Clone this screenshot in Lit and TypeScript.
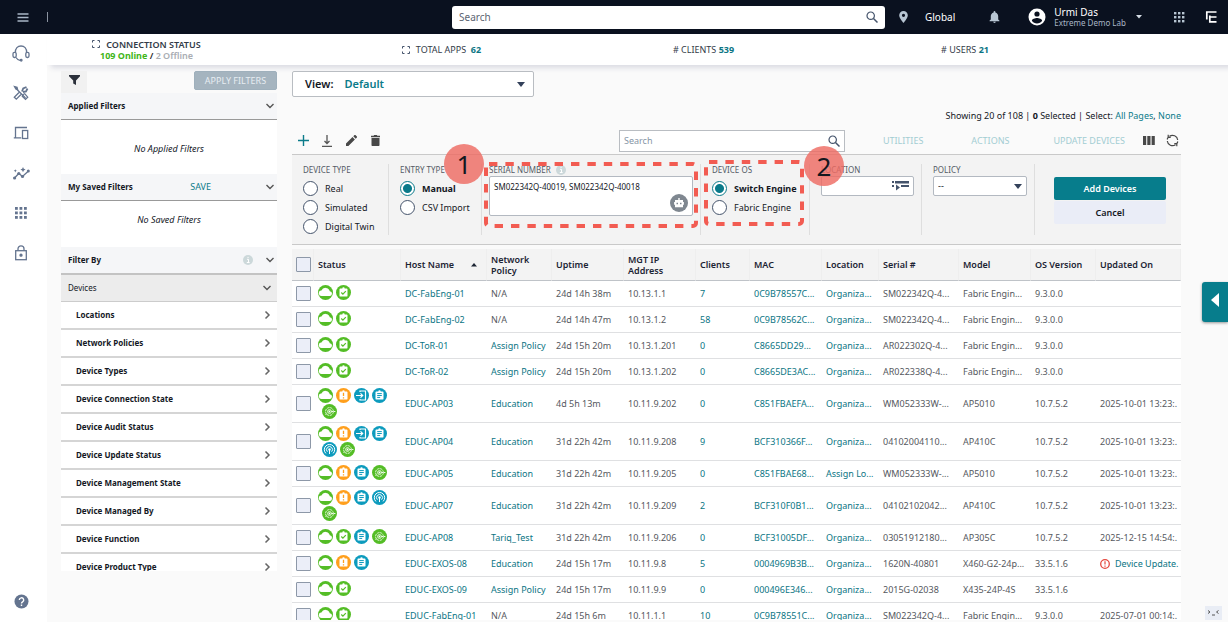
import { LitElement, html, css, svg, nothing } from "lit";
import { customElement, property } from "lit/decorators.js";

type IconName = "cloud" | "check" | "alert" | "login" | "list" | "radar" | "ai";

interface Row {
  icons: IconName[];
  host: string;
  policy: string;
  uptime: string;
  ip: string;
  clients: string;
  mac: string;
  location: string;
  serial: string;
  model: string;
  os: string;
  updated: string;
}

const row = (icons: string, ...t: string[]): Row => ({
  icons: icons.split(" ") as IconName[],
  host: t[0], policy: t[1], uptime: t[2], ip: t[3], clients: t[4], mac: t[5],
  location: t[6], serial: t[7], model: t[8], os: t[9], updated: t[10],
});

const ROWS: Row[] = [
  row("cloud check", "DC-FabEng-01", "N/A", "24d 14h 38m", "10.13.1.1", "7", "0C9B78557C...", "Organiza...", "SM022342Q-4...", "Fabric Engin...", "9.3.0.0", ""),
  row("cloud check", "DC-FabEng-02", "N/A", "24d 14h 47m", "10.13.1.2", "58", "0C9B78562C...", "Organiza...", "SM022342Q-4...", "Fabric Engin...", "9.3.0.0", ""),
  row("cloud check", "DC-ToR-01", "Assign Policy", "24d 15h 20m", "10.13.1.201", "0", "C8665DD29...", "Organiza...", "AR022302Q-4...", "Fabric Engin...", "9.3.0.0", ""),
  row("cloud check", "DC-ToR-02", "Assign Policy", "24d 15h 20m", "10.13.1.202", "0", "C8665DE3AC...", "Organiza...", "AR022338Q-4...", "Fabric Engin...", "9.3.0.0", ""),
  row("cloud alert login list ai", "EDUC-AP03", "Education", "4d 5h 13m", "10.11.9.202", "0", "C851FBAEFA...", "Organiza...", "WM052333W-...", "AP5010", "10.7.5.2", "2025-10-01 13:23:."),
  row("cloud alert login list radar ai", "EDUC-AP04", "Education", "31d 22h 42m", "10.11.9.208", "9", "BCF310366F...", "Organiza...", "04102004110...", "AP410C", "10.7.5.2", "2025-10-01 13:23:."),
  row("cloud alert list ai", "EDUC-AP05", "Education", "31d 22h 42m", "10.11.9.205", "0", "C851FBAE68...", "Assign Lo...", "WM052333W-...", "AP5010", "10.7.5.2", "2025-10-01 13:23:."),
  row("cloud alert list radar ai", "EDUC-AP07", "Education", "31d 22h 42m", "10.11.9.209", "2", "BCF310F0B1...", "Organiza...", "04102102042...", "AP410C", "10.7.5.2", "2025-10-01 13:23:."),
  row("cloud check list ai", "EDUC-AP08", "Tariq_Test", "31d 22h 42m", "10.11.9.206", "0", "BCF31005DF...", "Organiza...", "03051912180...", "AP305C", "10.7.5.2", "2025-12-15 14:54:."),
  row("cloud alert list", "EDUC-EXOS-08", "Education", "24d 15h 17m", "10.11.9.8", "5", "0004969B3B...", "Organiza...", "1620N-40801", "X460-G2-24p...", "33.5.1.6", "!Device Update."),
  row("cloud check", "EDUC-EXOS-09", "Assign Policy", "24d 15h 17m", "10.11.9.9", "0", "000496E346...", "Organiza...", "2015G-02038", "X435-24P-4S", "33.5.1.6", ""),
  row("cloud check", "EDUC-FabEng-01", "N/A", "24d 15h 6m", "10.11.1.1", "10", "0C9B78551C...", "Organiza...", "SM022342Q-4...", "Fabric Engin...", "9.3.0.0", "2025-07-01 00:14:."),
];

const COLUMNS: [string, number][] = [
  ["Status", 87], ["Host Name", 86], ["Network Policy", 65], ["Uptime", 72],
  ["MGT IP Address", 72], ["Clients", 54], ["MAC", 72], ["Location", 57],
  ["Serial #", 80], ["Model", 72], ["OS Version", 65], ["Updated On", 85],
];

const FILTERS = [
  "Locations", "Network Policies", "Device Types", "Device Connection State",
  "Device Audit Status", "Device Update Status", "Device Management State",
  "Device Managed By", "Device Function", "Device Product Type",
];

const GLYPHS: Record<IconName, unknown> = {
  cloud: svg`<circle cx="7.5" cy="7.5" r="7.5" fill="#54bd26"/><path fill="#fff" d="M3.800 11h7.600a2.400 2.400 0 0 0 .4-4.800A4.500 4.500 0 0 0 3.400 5.400 2.800 2.800 0 0 0 3.800 11z"/>`,
  check: svg`<circle cx="7.5" cy="7.5" r="7.5" fill="#54bd26"/><path fill="#fff" d="M4.400 3.400h1.900a1.200 1.200 0 0 1 2.400 0h1.900c.5 0 .9.4.9.9v6.400c0 .5-.4.9-.9.9H4.400a.9.9 0 0 1-.9-.9V4.300c0-.5.4-.9.9-.9z"/><path d="m5.300 7.500 1.600 1.600 2.900-3" fill="none" stroke="#54bd26" stroke-width="1.200"/>`,
  alert: svg`<circle cx="7.5" cy="7.5" r="7.5" fill="#ff9f1c"/><path fill="#fff" d="M4.400 3.400h1.900a1.200 1.200 0 0 1 2.400 0h1.900c.5 0 .9.4.9.9v6.400c0 .5-.4.9-.9.9H4.400a.9.9 0 0 1-.9-.9V4.300c0-.5.4-.9.9-.9z"/><path d="M7.500 4.800v3.200M7.500 9.200v1.300" stroke="#ff9f1c" stroke-width="1.300"/>`,
  login: svg`<circle cx="7.5" cy="7.5" r="7.5" fill="#0d9bbd"/><path d="M6 4V3h5.500v9H6v-1M2 7.500h6.500M6.500 5.300l2.200 2.200-2.200 2.200" fill="none" stroke="#fff" stroke-width="1.200"/>`,
  list: svg`<circle cx="7.5" cy="7.5" r="7.5" fill="#0d9bbd"/><path fill="#fff" d="M4.400 3.400h1.900a1.200 1.200 0 0 1 2.400 0h1.900c.5 0 .9.4.9.9v6.400c0 .5-.4.9-.9.9H4.400a.9.9 0 0 1-.9-.9V4.300c0-.5.4-.9.9-.9z"/><path d="M5.200 5.600h4.600M5.200 7.500h4.600M5.200 9.400h3" stroke="#0d9bbd"/>`,
  radar: svg`<circle cx="7.5" cy="7.5" r="7.5" fill="#0d9bbd"/><g fill="none" stroke="#fff"><path d="M3.900 11.400a5.200 5.200 0 1 1 7.200 0"/><path d="M5.400 9.700a3 3 0 1 1 4.200 0"/></g><circle cx="7.500" cy="7.500" r="1.200" fill="#fff"/><path d="M7.500 8v4" stroke="#fff"/>`,
  ai: svg`<circle cx="7.5" cy="7.5" r="7.5" fill="#54bd26"/><g fill="none" stroke="#fff"><circle cx="7.500" cy="7.500" r="3.900" stroke-width=".8" stroke-dasharray="2.400 .7"/><circle cx="7.500" cy="7.500" r="1.900" stroke-width=".8"/><path d="M9.400 7.500h1.800M12 7.500h1.400M3.500 11l1.200-1.200" stroke-width=".9"/></g><circle cx="7.500" cy="7.500" r=".9" fill="#fff"/>`,
};

const searchIcon = html`<svg width="12" height="12" viewBox="0 0 12 12" fill="none" stroke="#44536b"><circle cx="4.700" cy="4.700" r="3.700" stroke-width="1.200"/><path d="m7.500 7.500 4 4" stroke-width="1.500"/></svg>`;
const chevronDown = html`<svg width="10" height="10" viewBox="0 0 10 10" fill="none" stroke="#555" stroke-width="1.400"><path d="m1.500 3 3.500 3.500L8.500 3"/></svg>`;
const chevronRight = html`<svg width="10" height="10" viewBox="0 0 10 10" fill="none" stroke="#666" stroke-width="1.500"><path d="m3.500 1.500 3.500 3.500-3.500 3.500"/></svg>`;
const infoIcon = html`<svg width="10" height="10" viewBox="0 0 10 10"><circle cx="5" cy="5" r="5" fill="#ccd8da"/><path d="M4 4.300h1.500v3.200M3.800 7.500h2.800M4.500 2.400h1.100" stroke="#fff" fill="none"/></svg>`;
const expandIcon = html`<svg width="8" height="8" viewBox="0 0 8 8" fill="none" stroke="#44536b"><path d="M.5 2.500v-2h2M5.500.5h2v2M7.500 5.500v2h-2M2.500 7.500h-2v-2"/></svg>`;

@customElement("status-icon")
export class StatusIcon extends LitElement {
  @property() name: IconName = "cloud";
  static styles = css`
    :host { display: block; width: 15px; height: 15px; }
    svg { display: block; }
  `;
  render() {
    return html`<svg width="15" height="15" viewBox="0 0 15 15">${GLYPHS[this.name]}</svg>`;
  }
}

@customElement("top-bar")
export class TopBar extends LitElement {
  static styles = css`
    :host { display: grid; grid-template-columns: minmax(0, 452fr) minmax(0, 433fr) minmax(0, 343fr); align-items: center; height: 34px; background: #0a111f; color: #fff; font-size: 10px; }
    button { background: none; border: 0; padding: 0; color: inherit; font: inherit; display: flex; align-items: center; }
    .left { display: flex; align-items: center; padding-left: 17px; gap: 18px; }
    .divider { width: 1px; height: 10px; background: #8b93a0; }
    .search { height: 23px; background: #fff; border-radius: 3px; display: flex; align-items: center; padding: 0 7px; }
    .search input { flex: 1; min-width: 0; border: 0; outline: 0; padding: 0; font: inherit; background: none; color: #222; }
    .search input::placeholder { color: #5b6472; opacity: 1; }
    .right { display: flex; align-items: center; padding: 0 11px 0 14px; }
    .place { gap: 17px; }
    .bell { margin-left: 34px; }
    .user { margin-left: 28px; gap: 8px; text-align: left; line-height: 11px; }
    .org { display: block; font-size: 8px; line-height: 10px; color: #a9b6c6; }
    .name { display: block; font-size: 10px; }
    .caret { margin-left: 2px; }
    .end { margin-left: auto; display: flex; gap: 20px; align-items: center; }
  `;
  render() {
    return html`
      <div class="left">
        <button aria-label="Menu"><svg width="12" height="9" viewBox="0 0 12 9" stroke="#a9b6c6" stroke-width="1.300"><path d="M.5 1h11M.5 4.500h11M.5 8h11"/></svg></button>
        <span class="divider"></span>
      </div>
      <div class="search"><input type="text" placeholder="Search" aria-label="Search everything" />${searchIcon}</div>
      <div class="right">
        <button class="place"><svg width="9" height="12" viewBox="0 0 9 12"><path fill="#b7c5d2" d="M4.500 0A4.300 4.300 0 0 0 .2 4.300C.2 7.500 4.500 12 4.500 12s4.300-4.500 4.300-7.700A4.300 4.300 0 0 0 4.500 0zm0 5.900a1.600 1.600 0 1 1 0-3.200 1.600 1.600 0 0 1 0 3.200z"/></svg>Global</button>
        <button class="bell" aria-label="Notifications"><svg width="11" height="12" viewBox="0 0 11 12"><path fill="#b7c5d2" d="M5.500 12c.7 0 1.300-.5 1.300-1.200H4.200c0 .7.600 1.200 1.300 1.200zm3.700-3.600V5.300c0-1.900-1-3.400-2.800-3.900V1a.9.900 0 0 0-1.800 0v.4C2.800 1.900 1.800 3.400 1.800 5.300v3.100L.6 9.600v.6h9.800v-.6z"/></svg></button>
        <button class="user"><svg width="18" height="18" viewBox="0 0 18 18"><circle cx="9" cy="9" r="8.500" fill="#fff"/><circle cx="9" cy="6" r="2.600" fill="#0a111f"/><path d="M3.900 12.700a6.100 6.100 0 0 0 10.200 0c0-1.700-3.400-2.600-5.100-2.600s-5.100.9-5.100 2.600z" fill="#0a111f"/></svg>
          <span><span class="name">Urmi Das</span><span class="org">Extreme Demo Lab</span></span>
          <svg class="caret" width="6" height="4" viewBox="0 0 6 4"><path d="M0 0h6L3 3.500z" fill="#d5dde5"/></svg></button>
        <div class="end">
          <button aria-label="Apps"><svg width="11" height="11" viewBox="0 0 11 11" fill="#b7c5d2">${[0, 4, 8].map((y) => [0, 4, 8].map((x) => svg`<rect x=${x} y=${y} width="2.400" height="2.400"/>`))}</svg></button>
          <svg width="12" height="12" viewBox="0 0 12 12" fill="none" stroke="#fff" stroke-width="1.700"><path d="M11.500 1H1.800v7.500M11.500 10.800H4.800V4.500M4.800 6h6.700"/></svg>
        </div>
      </div>`;
  }
}

@customElement("side-rail")
export class SideRail extends LitElement {
  static styles = css`
    :host { display: flex; flex-direction: column; align-items: center; width: 47px; background: #fff; box-sizing: border-box; padding: 11px 5px 13px 0; gap: 24px; }
    a { display: flex; height: 16px; align-items: center; }
    .help { margin-top: auto; }
  `;
  render() {
    return html`
      <a href="#support" aria-label="Support"><svg width="18" height="17" viewBox="0 0 18 17" fill="none" stroke="#64748f" stroke-width="1.300"><path d="M3.400 7.500C3.200 3.200 5.700 1 9 1s5.800 2.200 5.600 6.500"/><rect x="1" y="7.300" width="3.200" height="5.200" rx="1.400"/><rect x="13.800" y="7.300" width="3.200" height="5.200" rx="1.400"/><path d="M4 12.500c1 1.700 2.300 2.600 4 2.800"/><circle cx="9.200" cy="15.300" r=".8"/></svg></a>
      <a href="#tools" aria-label="Tools"><svg width="16" height="16" viewBox="0 0 16 16" fill="none" stroke="#64748f" stroke-width="1.300"><path d="m6 7.500-4.700 4.700 2 2L8 9.500M3 3.500l9.500 9.500"/><path d="m10 9.500 1.700-.8 3 3.500-2.200 2.200-3.200-3z"/><path d="m9 6.500 1.200-3L13.500 2M14.500 3.500 13 6.500l-3 .5" stroke-width="1.800"/><path d="M1.500 1.500 4 2.300l.5 2L2.800 4z" fill="#64748f"/></svg></a>
      <a href="#devices" aria-label="Devices"><svg width="16" height="14" viewBox="0 0 16 14" fill="none" stroke="#64748f" stroke-width="1.300"><path d="M14 1.500H2.500v9.800M.8 11.800h7.500"/><rect x="9.500" y="4.500" width="5.200" height="8"/></svg></a>
      <a href="#insights" aria-label="Insights"><svg width="17" height="13" viewBox="0 0 17 13" fill="none" stroke="#64748f" stroke-width="1.300"><path d="m1.500 11 4.300-4.500L9.500 9.500 15.500 4"/><g fill="#64748f" stroke="none"><circle cx="1.600" cy="11" r="1.600"/><circle cx="5.800" cy="6.500" r="1.600"/><circle cx="9.500" cy="9.500" r="1.600"/><circle cx="15.300" cy="4" r="1.500"/><path d="m10 0 .8 1.800 1.800.8-1.800.8L10 5.200l-.8-1.800-1.800-.8 1.800-.8zM2.300 2.200l.5 1.100 1.100.5-1.100.5-.5 1.100-.5-1.100-1.100-.5 1.100-.5z"/></g></svg></a>
      <a href="#apps" aria-label="Applications"><svg width="12" height="12" viewBox="0 0 12 12" fill="#64748f">${[0, 4.5, 9].map((y) => [0, 4.5, 9].map((x) => svg`<rect x=${x} y=${y} width="2.800" height="2.800"/>`))}</svg></a>
      <a href="#security" aria-label="Security"><svg width="12" height="16" viewBox="0 0 12 16" fill="none" stroke="#64748f" stroke-width="1.300"><rect x=".7" y="5.700" width="10.600" height="9"/><path d="M3 5.500V3.800a3 3 0 0 1 6 0v1.700"/><circle cx="6" cy="10.200" r="1" fill="#64748f"/></svg></a>
      <a class="help" href="#help" aria-label="Help"><svg width="15" height="15" viewBox="0 0 15 15"><circle cx="7.500" cy="7.500" r="7" fill="#64748f"/><path d="M5.300 6a2.200 2.200 0 1 1 3.300 1.900c-.8.500-1.100.8-1.100 1.700M7.500 10.600v1.400" stroke="#fff" stroke-width="1.400" fill="none"/></svg></a>`;
  }
}

@customElement("filter-panel")
export class FilterPanel extends LitElement {
  static styles = css`
    :host { display: flex; flex-direction: column; width: 216px; flex: none; font-size: 8px; color: #14181f; min-height: 0; }
    button { font: inherit; color: inherit; }
    .bar { display: flex; justify-content: space-between; align-items: flex-start; height: 22px; flex: none; }
    .funnel { width: 26px; height: 22px; background: #f1f1f1; border: 0; padding: 0; }
    .apply { width: 83px; height: 19px; border: 1px solid #9fb0bc; border-radius: 2px; background: #a5b4bf; color: #e7edf2; font-size: 9px; padding: 0; }
    .head { display: flex; align-items: center; box-sizing: border-box; height: 27px; flex: none; padding: 0 2px 0 7px; background: #f5f6f8; border-bottom: 1px solid #999; font-weight: 700; }
    .head h2 { margin: 0; font-size: 8px; flex: 1; }
    .save { border: 0; background: none; color: #0b7b8a; font-size: 9px; font-weight: 400; padding: 0; margin-right: 54px; }
    .toggle { border: 0; background: none; padding: 0; display: flex; }
    .info { margin-right: 12px; display: flex; }
    .empty { background: #fff; display: flex; align-items: center; justify-content: center; font-style: italic; height: 54px; flex: none; font-size: 9px; padding-top: 4px; box-sizing: border-box; }
    .short { height: 46px; padding-top: 0; padding-bottom: 8px; }
    .by { border-bottom: 2px solid #c3c3c3; height: 28px; }
    .group { display: flex; align-items: center; justify-content: space-between; height: 27px; flex: none; padding: 0 5px 0 7px; background: #ececec; border: 0; border-bottom: 1px solid #ccc; text-align: left; }
    ul { list-style: none; margin: 0 0 49px; padding: 0; overflow: hidden; flex: 1; min-height: 0; background: #fff; }
    li { border-bottom: 2px solid #d5d5d5; }
    li button { display: flex; align-items: center; justify-content: space-between; width: 100%; height: 26px; border: 0; background: #fff; padding: 0 5px 0 15px; font-weight: 700; }
  `;
  render() {
    return html`
      <div class="bar">
        <button class="funnel" aria-label="Filter"><svg width="11" height="10" viewBox="0 0 11 10"><path d="M0 0h11v1.200L7 5.500V10L4.200 8.600V5.500L0 1.200z" fill="#2b303a"/></svg></button>
        <button class="apply">APPLY FILTERS</button>
      </div>
      <div class="head"><h2>Applied Filters</h2><button class="toggle" aria-label="Collapse applied filters">${chevronDown}</button></div>
      <div class="empty">No Applied Filters</div>
      <div class="head"><h2>My Saved Filters</h2><button class="save">SAVE</button><button class="toggle" aria-label="Collapse saved filters">${chevronDown}</button></div>
      <div class="empty short">No Saved Filters</div>
      <div class="head by"><h2>Filter By</h2><span class="info">${infoIcon}</span><button class="toggle" aria-label="Collapse filter list">${chevronDown}</button></div>
      <button class="group">Devices${chevronDown}</button>
      <ul>${FILTERS.map((f) => html`<li><button>${f}${chevronRight}</button></li>`)}</ul>`;
  }
}

@customElement("add-device-form")
export class AddDeviceForm extends LitElement {
  static styles = css`
    :host { display: block; background: #f3f3f3; border-top: 1px solid #c9c9c9; border-bottom: 1px solid #c9c9c9; }
    form { display: grid; grid-template-columns: 97fr 93fr 219fr 109fr 112fr 113fr 146fr; padding: 9px 0; font-size: 9px; color: #14181f; }
    fieldset { margin: 0; border: 0; padding: 0; min-width: 0; }
    .cell { border-right: 1px solid #dedede; padding: 0 7px 0 11px; min-width: 0; box-sizing: border-box; height: 71px; position: relative; }
    .serial { padding-left: 7px; }
    .last { border: 0; padding: 13px 15px 0 19px; }
    legend, .caption { display: flex; gap: 5px; align-items: center; font-size: 8px; line-height: 12px; height: 12px; padding: 0; color: #555b66; text-transform: uppercase; }
    .choices { padding-top: 3px; }
    .radio { display: flex; align-items: center; gap: 7px; height: 19px; white-space: nowrap; }
    .radio input { appearance: none; width: 15px; height: 15px; margin: 0; border: 1px solid #44536b; border-radius: 50%; background: #fff; flex: none; }
    .radio input:checked { border-color: #0a7a8a; background: radial-gradient(circle, #0a7a8a 0 4px, #fff 5px); }
    .radio input:checked + span { font-weight: 700; }
    textarea { display: block; box-sizing: border-box; width: 205px; max-width: 100%; height: 40px; resize: none; border: 1px solid #b3b9c1; border-radius: 2px; font: 8px/12px "Noto Sans", sans-serif; color: #14181f; padding: 4px; background: #fff; }
    .bot { position: absolute; right: 12px; top: 30px; padding: 0; border: 0; background: none; display: flex; }
    .box { display: flex; align-items: center; box-sizing: border-box; width: 95px; max-width: 100%; height: 20px; border: 1px solid #b3b9c1; border-radius: 2px; background: #fff; padding: 0 4px; }
    .box input, .box select { flex: 1; min-width: 0; border: 0; outline: 0; appearance: none; background: none; font: inherit; padding: 0; color: inherit; }
    .add, .cancel { display: block; width: 100%; border: 0; font: 600 9px "Noto Sans", sans-serif; padding: 0; height: 23px; border-radius: 2px; }
    .add { background: #077d8c; color: #fff; }
    .cancel { background: #eaedf7; color: #14181f; margin-top: 1px; }
    .mark { position: absolute; z-index: 1; overflow: visible; pointer-events: none; }
    .one { left: 1px; top: -3px; }
    .two { left: 1px; top: -5px; }
    .step { position: absolute; z-index: 2; width: 40px; height: 40px; border-radius: 50%; background: rgba(238, 107, 99, 0.82); color: #14181f; font-size: 26px; line-height: 40px; text-align: center; }
    .step-one { left: -38px; top: -20px; }
    .step-two { right: -35px; top: -18px; }
  `;
  private radios(group: string, legend: string, labels: string[], chosen = "") {
    return html`<fieldset><legend>${legend}</legend><div class="choices">${labels.map(
      (label) => html`<label class="radio"><input type="radio" name=${group} ?checked=${label === chosen} /><span>${label}</span></label>`,
    )}</div></fieldset>`;
  }
  render() {
    return html`<form @submit=${(e: Event) => e.preventDefault()}>
      <div class="cell">${this.radios("type", "Device Type", ["Real", "Simulated", "Digital Twin"])}</div>
      <div class="cell">${this.radios("entry", "Entry Type", ["Manual", "CSV Import"], "Manual")}</div>
      <div class="cell serial">
        <label class="caption" for="serial">Serial Number ${infoIcon}</label>
        <textarea id="serial" .value=${"SM022342Q-40019, SM022342Q-40018"}></textarea>
        <button class="bot" type="button" aria-label="Assistant"><svg width="18" height="18" viewBox="0 0 18 18"><circle cx="9" cy="9" r="9" fill="#7f8790"/><path fill="#fff" fill-rule="evenodd" d="M8.300 4h1.400v2H13v2h.9v2.800H13v2.400H5v-2.400h-.9V8H5V6h3.300zM6.500 8.700v1.500H8V8.700zm3.500 0v1.500h1.500V8.700z"/></svg></button>
        <svg class="mark one" width="214" height="66" viewBox="0 0 214 66"><rect x="3" y="3" width="210" height="62" rx="3" fill="none" stroke="#f25c52" stroke-width="4" stroke-dasharray="8.400 8"/></svg>
        <span class="step step-one">1</span>
      </div>
      <div class="cell">${this.radios("os", "Device OS", ["Switch Engine", "Fabric Engine"], "Switch Engine")}
        <svg class="mark two" width="102" height="66" viewBox="0 0 102 66"><rect x="4" y="3" width="96" height="62" rx="3" fill="none" stroke="#f25c52" stroke-width="4" stroke-dasharray="8.400 8"/></svg>
        <span class="step step-two">2</span>
      </div>
      <div class="cell">
        <label class="caption" for="location">Location</label>
        <span class="box"><input id="location" type="text" /><svg width="17" height="10" viewBox="0 0 17 10" fill="#44536b"><path d="M0 0h2v2H0zM3 0h14v2.500H3zM0 4h2v2H0zM9 4h8v2H9zM4 3.500l4 3-4 3z"/></svg></span>
      </div>
      <div class="cell">
        <label class="caption" for="policy">Policy</label>
        <span class="box"><select id="policy"><option>--</option></select><svg width="8" height="5" viewBox="0 0 8 5"><path d="M0 0h8L4 5z" fill="#33415a"/></svg></span>
      </div>
      <div class="cell last"><button class="add" type="submit">Add Devices</button><button class="cancel" type="button">Cancel</button></div>
    </form>`;
  }
}

@customElement("device-table")
export class DeviceTable extends LitElement {
  static styles = css`
    :host { display: block; background: #fff; }
    table { width: 100%; table-layout: fixed; border-collapse: separate; border-spacing: 0; font-size: 9px; line-height: 11px; color: #55585e; }
    th, td { box-sizing: border-box; padding: 0 0 0 4px; text-align: left; white-space: nowrap; overflow: hidden; }
    th { height: 32px; background: #f3f3f3; color: #1c2433; font-weight: 600; border-bottom: 1px solid #bfc3c8; border-right: 1px solid #eeeeee; white-space: normal; }
    td { height: 26px; border-bottom: 1px solid #dfe0e2; }
    .tall td { height: 38px; }
    .select { padding: 0; }
    .pick { display: block; appearance: none; margin: 0 0 0 4px; width: 15px; height: 15px; box-sizing: border-box; border: 1px solid #8d98a8; border-radius: 1px; background: #ebeef8; }
    .sorted { display: flex; justify-content: space-between; align-items: center; padding-right: 9px; }
    .icons { display: flex; gap: 3px; height: 17px; }
    .more { padding-left: 4px; height: 15px; }
    .tall .icons { height: 16px; }
    a { color: #0b7584; text-decoration: none; }
    .warn { display: flex; align-items: center; gap: 5px; }
  `;
  private link(text: string) {
    return text === "N/A" ? text : html`<a href="#detail">${text}</a>`;
  }
  render() {
    return html`<table>
      <colgroup><col style="width:22px" />${COLUMNS.map(([, w]) => html`<col style="width:${w}px" />`)}</colgroup>
      <thead><tr><th class="select"><input class="pick" type="checkbox" aria-label="Select all" /></th>
        ${COLUMNS.map(([name]) => html`<th>${name === "Host Name" ? html`<span class="sorted">${name}<svg width="6" height="4" viewBox="0 0 6 4"><path d="M0 3.500h6L3 0z" fill="#1c2433"/></svg></span>` : name}</th>`)}</tr></thead>
      <tbody>${ROWS.map((r) => html`<tr class=${r.icons.length > 4 || r.host === "EDUC-AP07" ? "tall" : ""}>
        <td class="select"><input class="pick" type="checkbox" aria-label="Select ${r.host}" /></td>
        <td><div class="icons">${r.icons.slice(0, 4).map((i) => html`<status-icon name=${i}></status-icon>`)}</div>
          ${r.icons.length > 4 ? html`<div class="icons more">${r.icons.slice(4).map((i) => html`<status-icon name=${i}></status-icon>`)}</div>` : nothing}</td>
        <td>${this.link(r.host)}</td><td>${this.link(r.policy)}</td><td>${r.uptime}</td><td>${r.ip}</td>
        <td>${this.link(r.clients)}</td><td>${this.link(r.mac)}</td><td>${this.link(r.location)}</td>
        <td>${r.serial}</td><td>${r.model}</td><td>${r.os}</td>
        <td>${r.updated.startsWith("!")
          ? html`<span class="warn"><svg width="10" height="10" viewBox="0 0 10 10" fill="none" stroke="#e5493f"><circle cx="5" cy="5" r="4.300" stroke-width="1.300"/><path d="M5 2.300v3.200M5 6.500v1.300" stroke-width="1.200"/></svg><a href="#update">${r.updated.slice(1)}</a></span>`
          : r.updated}</td></tr>`)}</tbody>
    </table>`;
  }
}

@customElement("app-root")
export class AppRoot extends LitElement {
  static styles = css`
    :host { display: flex; flex-direction: column; height: 100vh; overflow: hidden; position: relative; font-family: "Noto Sans", "Open Sans", sans-serif; font-size: 10px; line-height: 14px; color: #14181f; background: #fafafa; }
    button, input, select { font-family: inherit; }
    a { color: #0b7b8a; text-decoration: none; }
    top-bar { flex: none; }
    .body { display: flex; flex: 1; min-height: 0; }
    .page { flex: 1; min-width: 0; display: flex; flex-direction: column; }
    .stats { display: grid; grid-template-columns: 199fr 391fr 133fr 390fr 68fr; height: 31px; flex: none; background: #fff; box-shadow: 4px 3px 5px rgba(60, 70, 110, 0.16); align-items: center; text-align: center; font-size: 9px; line-height: 11px; color: #333b48; }
    .stats b { color: #0b7584; }
    .conn { font-weight: 600; }
    .line { display: flex; align-items: center; justify-content: center; gap: 6px; }
    .online { color: #3fb618; font-weight: 700; }
    .offline { color: #a9adb3; }
    .slash { color: #222; }
    .content { flex: 1; min-height: 0; display: flex; gap: 15px; padding: 6px 47px 2px 14px; }
    .main { flex: 1; min-width: 0; display: flex; flex-direction: column; }
    .view { display: flex; align-items: center; gap: 11px; width: 242px; height: 26px; flex: none; box-sizing: border-box; border: 1px solid #b9bdc2; border-radius: 2px; background: #fff; padding: 0 8px 0 12px; font-size: 11px; font-weight: 600; }
    .view select { flex: 1; appearance: none; border: 0; background: none; padding: 0; font: inherit; color: #0b7b8a; }
    .count { text-align: right; margin-top: 12px; flex: none; white-space: nowrap; font-size: 9px; }
    .tools { display: grid; grid-template-columns: minmax(0, 327fr) minmax(0, 226fr) minmax(0, 336fr); align-items: center; height: 31px; flex: none; padding-top: 4px; box-sizing: border-box; }
    .tools button { border: 0; background: none; padding: 0; display: flex; align-items: center; justify-content: center; }
    .edit { display: flex; gap: 12px; padding-left: 5px; }
    .edit button { width: 12px; height: 12px; }
    .find { display: flex; align-items: center; box-sizing: border-box; height: 22px; border: 1px solid #b9bdc2; background: #fff; padding: 0 4px; }
    .find input { flex: 1; min-width: 0; border: 0; outline: 0; background: none; font-size: 9px; padding: 0; }
    .find input::placeholder { color: #8695a6; opacity: 1; }
    .actions { display: flex; align-items: center; justify-content: flex-end; padding-right: 2px; }
    .actions button { font-size: 9px; color: #a3cdd3; white-space: nowrap; }
    .gap-lg { margin-right: 48px; }
    .gap-md { margin-right: 44px; }
    .gap-sm { margin-right: 18px; }
    .gap-xs { margin-right: 11px; }
    device-table { margin-top: 4px; flex: 1; min-height: 0; overflow: hidden; }
    .drawer { position: absolute; right: 0; top: 282px; width: 26px; height: 40px; border: 0; border-radius: 3px 0 0 3px; background: #077d8c; padding: 0; box-shadow: 0 1px 3px rgba(0, 0, 0, 0.4); }
    .chip { position: absolute; right: 6px; bottom: 2px; width: 17px; height: 14px; border: 0; padding: 0; background: #e9edf5; display: flex; align-items: center; justify-content: center; }
  `;
  render() {
    return html`
      <top-bar></top-bar>
      <div class="body">
        <side-rail></side-rail>
        <div class="page">
          <div class="stats">
            <div class="conn"><div class="line">${expandIcon}CONNECTION STATUS</div><span class="online">109 Online</span> <span class="slash">/</span> <span class="offline">2 Offline</span></div>
            <div class="line">${expandIcon}<span>TOTAL APPS &nbsp;<b>62</b></span></div>
            <div># CLIENTS <b>539</b></div>
            <div># USERS <b>21</b></div>
          </div>
          <div class="content">
            <filter-panel></filter-panel>
            <div class="main">
              <label class="view">View: <select><option>Default</option></select><svg width="8" height="5" viewBox="0 0 8 5"><path d="M0 0h8L4 5z" fill="#33415a"/></svg></label>
              <div class="count">Showing 20 of 108 | <strong>0</strong> Selected | Select: <a href="#all">All Pages</a>, <a href="#none">None</a></div>
              <div class="tools">
                <div class="edit">
                  <button aria-label="Add"><svg width="11" height="11" viewBox="0 0 11 11" stroke="#0b7b8a" stroke-width="1.400"><path d="M5.500 0v11M0 5.500h11"/></svg></button>
                  <button aria-label="Download"><svg width="12" height="12" viewBox="0 0 12 12" fill="none" stroke="#555" stroke-width="1.300"><path d="M6 0v8M3.500 6 6 8.500 8.500 6M1 11.300h10"/></svg></button>
                  <button aria-label="Edit"><svg width="11" height="11" viewBox="0 0 11 11" fill="#484848"><path d="M0 8.600 6.500 2l2.400 2.400L2.400 11H0zM7.300 1.300 8.500.1c.3-.2.700-.2.900 0L10.900 1.600c.2.2.2.600 0 .9L9.700 3.700z"/></svg></button>
                  <button aria-label="Delete"><svg width="9" height="11" viewBox="0 0 9 11" fill="#484848"><path d="M.5 3h8v7c0 .6-.4 1-1 1h-6c-.6 0-1-.4-1-1zM0 .8h2.600L3.200 0h2.600l.6.800H9v1.400H0z"/></svg></button>
                </div>
                <div class="find"><input type="text" placeholder="Search" aria-label="Search devices" />${searchIcon}</div>
                <div class="actions">
                  <button class="gap-lg">UTILITIES</button><button class="gap-md">ACTIONS</button><button class="gap-sm">UPDATE DEVICES</button>
                  <button class="gap-xs" aria-label="Columns"><svg width="12" height="9" viewBox="0 0 12 9" fill="#484848"><path d="M0 0h3.200v9H0zM4.300 0h3.200v9H4.300zM8.600 0h3.200v9H8.600z"/></svg></button>
                  <button aria-label="Refresh"><svg width="13" height="13" viewBox="0 0 13 13" fill="none" stroke="#484848" stroke-width="1.200"><path d="M3.500 2.300A5.200 5.200 0 0 1 11.700 6M9.500 10.700A5.200 5.200 0 0 1 1.300 7M1.200 5.500A5 5 0 0 1 2 3.700M11.800 7.500a5 5 0 0 1-.8 1.800M2.200.8v2.500h2.500M10.800 12.200V9.700H8.300"/></svg></button>
                </div>
              </div>
              <add-device-form></add-device-form>
              <device-table></device-table>
            </div>
          </div>
        </div>
      </div>
      <button class="drawer" aria-label="Open drawer"><svg width="8" height="14" viewBox="0 0 8 14"><path d="M8 0v14L0 7z" fill="#fff"/></svg></button>
      <button class="chip" aria-label="Shortcuts"><svg width="11" height="6" viewBox="0 0 11 6" fill="none" stroke="#555"><path d="m0 .5 2 1.500-2 1.500M10.500.5l-2 1.500 2 1.500M4 5h3"/></svg></button>`;
  }
}
